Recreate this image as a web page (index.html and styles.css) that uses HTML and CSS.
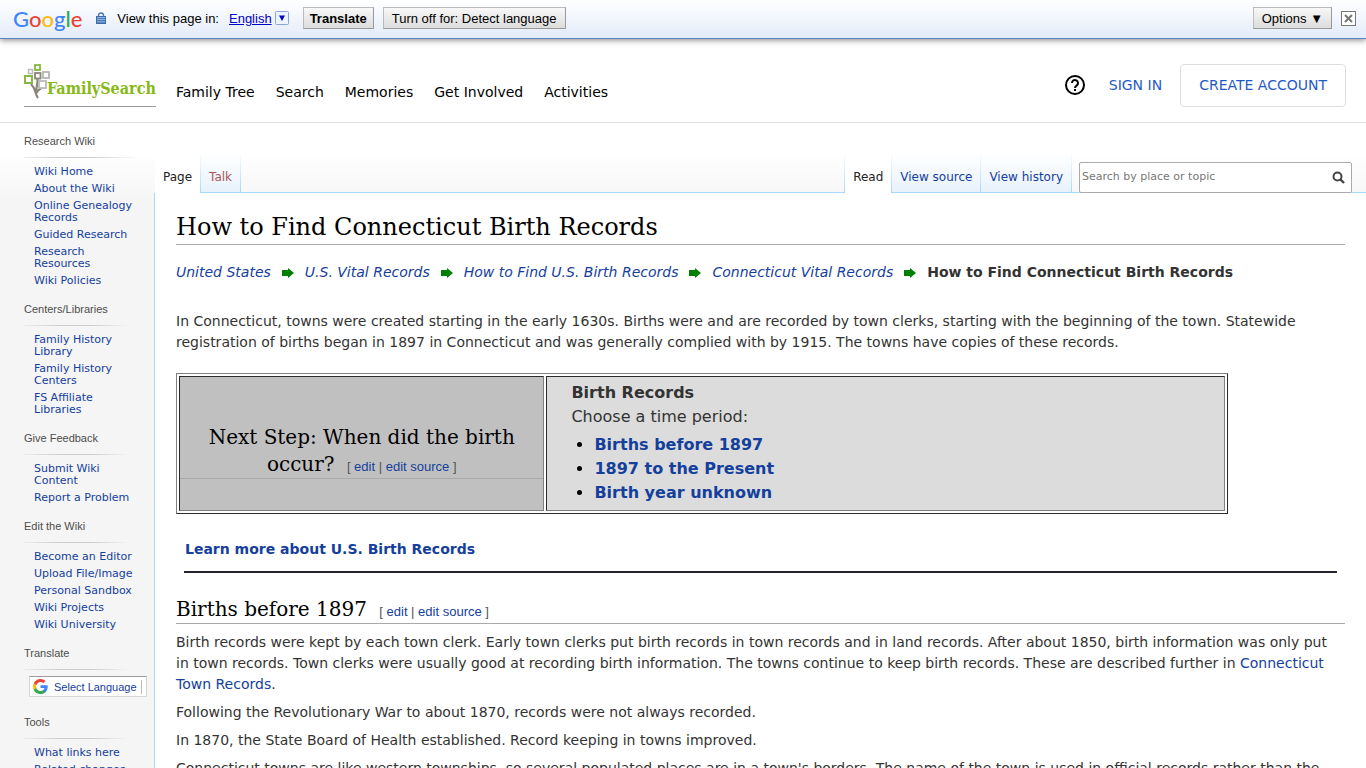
FILE: index.html
```html
<!DOCTYPE html>
<html lang="en">
<head>
  <meta charset="UTF-8" />
  <meta name="viewport" content="width=device-width, initial-scale=1.0"/>
  <title>How to Find Connecticut Birth Records</title>
  <link rel="stylesheet" href="styles.css">
</head>
<body>
  <div class="translate-bar">
    <div class="google-logo" aria-label="Google"><span class="g-blue">G</span><span class="g-red">o</span><span class="g-yellow">o</span><span class="g-blue">g</span><span class="g-green">l</span><span class="g-red">e</span></div>
    <svg class="lock" width="10" height="12" viewBox="0 0 10 12">
      <path d="M2.5 5V3.2a2.5 2.2 0 0 1 5 0V5" fill="none" stroke="#4a7ab8" stroke-width="1.4"/>
      <rect x="0.5" y="4.5" width="9" height="7" fill="#8fb4e3" stroke="#3d6ca8"/>
      <path d="M1 6.500h8M1 8.500h8M1 10.200h8" stroke="#3d6ca8" stroke-width="0.8"/>
    </svg>
    <span>View this page in:</span>
    <a class="language" href="#"><span>English</span><svg width="14" height="14" viewBox="0 0 14 14"><rect x="0.5" y="0.5" width="13" height="13" rx="1" fill="#eef4fd" stroke="#8aa5d6"/><path d="M4 4.500h6L7 10z" fill="#0000cc"/></svg></a>
    <button class="bar-button strong">Translate</button>
    <button class="bar-button">Turn off for: Detect language</button>
    <button class="bar-button options">Options ▼</button>
    <button class="close" aria-label="Close"><svg width="15" height="15" viewBox="0 0 15 15"><rect x="0.5" y="0.5" width="14" height="14" fill="#fff" stroke="#777"/><path d="M4 4l7 7M11 4l-7 7" stroke="#777" stroke-width="2"/></svg></button>
  </div>

  <header class="header">
    <a class="logo" href="#">
      <svg width="28" height="36" viewBox="0 0 28 36" fill="none">
        <path d="M14 34C10.500 30 13 26 7 20M12 28c0-5 2-7 1.500-13M12.500 29c1-3 3-4 5-5" stroke="#8c857b" stroke-width="2.200"/>
        <rect x="11" y="1" width="5" height="5" stroke="#87b940" stroke-width="1.800"/>
        <rect x="4.500" y="5.500" width="4" height="4" stroke="#bbb" stroke-width="1.500"/>
        <rect x="11" y="9" width="5.500" height="5.500" fill="#fff" stroke="#8c857b" stroke-width="1.800"/>
        <rect x="19" y="8" width="6" height="6" stroke="#b5b5b5" stroke-width="1.800"/>
        <rect x="1" y="12" width="7" height="7" fill="#fff" stroke="#87b940" stroke-width="2"/>
        <rect x="15" y="17" width="7" height="7" fill="#fff" stroke="#bbb" stroke-width="1.800"/>
      </svg>
      <span>FamilySearch</span>
    </a>
    <nav class="nav-links">
      <a href="#">Family Tree</a>
      <a href="#">Search</a>
      <a href="#">Memories</a>
      <a href="#">Get Involved</a>
      <a href="#">Activities</a>
    </nav>
    <div class="account">
      <a class="help" href="#" aria-label="Help"><svg width="20" height="20" viewBox="0 0 20 20" fill="none" stroke="#000" stroke-width="2"><circle cx="10" cy="10" r="9"/><path d="M7 8a3 3 0 1 1 4.800 2.400C10.700 11.200 10 11.700 10 13"/><path d="M10 14v2"/></svg></a>
      <a href="#">SIGN IN</a>
      <a class="create" href="#">CREATE ACCOUNT</a>
    </div>
  </header>

  <div class="page">
    <aside class="sidebar">
      <section class="portal">
        <h3>Research Wiki</h3>
        <ul>
          <li><a href="#">Wiki Home</a></li>
          <li><a href="#">About the Wiki</a></li>
          <li><a href="#">Online Genealogy Records</a></li>
          <li><a href="#">Guided Research</a></li>
          <li><a href="#">Research Resources</a></li>
          <li><a href="#">Wiki Policies</a></li>
        </ul>
      </section>
      <section class="portal">
        <h3>Centers/Libraries</h3>
        <ul>
          <li><a href="#">Family History Library</a></li>
          <li><a href="#">Family History Centers</a></li>
          <li><a href="#">FS Affiliate Libraries</a></li>
        </ul>
      </section>
      <section class="portal">
        <h3>Give Feedback</h3>
        <ul>
          <li><a href="#">Submit Wiki Content</a></li>
          <li><a href="#">Report a Problem</a></li>
        </ul>
      </section>
      <section class="portal">
        <h3>Edit the Wiki</h3>
        <ul>
          <li><a href="#">Become an Editor</a></li>
          <li><a href="#">Upload File/Image</a></li>
          <li><a href="#">Personal Sandbox</a></li>
          <li><a href="#">Wiki Projects</a></li>
          <li><a href="#">Wiki University</a></li>
        </ul>
      </section>
      <section class="portal">
        <h3>Translate</h3>
        <a class="select-language" href="#">
          <svg width="15" height="15" viewBox="0 0 48 48">
            <path fill="#4285f4" d="M47 24.500c0-1.600-.2-3.200-.5-4.700H24v9h12.900c-.6 3-2.300 5.500-4.800 7.200v6h7.700C44.400 37.900 47 31.800 47 24.500z"/>
            <path fill="#34a853" d="M24 48c6.500 0 11.900-2.100 15.900-5.800l-7.700-6c-2.200 1.400-4.900 2.300-8.200 2.300-6.300 0-11.600-4.200-13.500-9.900H2.600v6.200C6.500 42.600 14.600 48 24 48z"/>
            <path fill="#fbbc05" d="M10.500 28.600c-1-3-1-6.200 0-9.200v-6.200H2.600c-3.400 6.800-3.400 14.800 0 21.600z"/>
            <path fill="#ea4335" d="M24 9.500c3.500 0 6.700 1.200 9.200 3.600l6.800-6.800C35.900 2.400 30.500 0 24 0 14.600 0 6.500 5.400 2.600 13.200l7.900 6.200C12.400 13.700 17.700 9.500 24 9.500z"/>
          </svg>
          <span>Select Language</span>
        </a>
      </section>
      <section class="portal">
        <h3>Tools</h3>
        <ul>
          <li><a href="#">What links here</a></li>
          <li><a href="#">Related changes</a></li>
        </ul>
      </section>
    </aside>

    <div class="main">
      <div class="tabs">
        <a class="tab active" href="#">Page</a>
        <a class="tab new" href="#">Talk</a>
        <a class="tab active views" href="#">Read</a>
        <a class="tab" href="#">View source</a>
        <a class="tab" href="#">View history</a>
        <form class="search">
          <input type="search" placeholder="Search by place or topic" aria-label="Search by place or topic">
          <button type="button" aria-label="Search"><svg width="13" height="13" viewBox="0 0 13 13" fill="none" stroke="#444"><circle cx="5.500" cy="5.500" r="4" stroke-width="2"/><path d="M8.500 8.500l3.500 3.500" stroke-width="2.400"/></svg></button>
        </form>
      </div>

      <main class="content">
        <h1>How to Find Connecticut Birth Records</h1>
        <nav class="breadcrumb">
          <a href="#">United States</a>
          <svg width="12" height="10" viewBox="0 0 12 10"><path d="M0 2h6V0l6 5-6 5V8H0z" fill="#008000"/></svg>
          <a href="#">U.S. Vital Records</a>
          <svg width="12" height="10" viewBox="0 0 12 10"><path d="M0 2h6V0l6 5-6 5V8H0z" fill="#008000"/></svg>
          <a href="#">How to Find U.S. Birth Records</a>
          <svg width="12" height="10" viewBox="0 0 12 10"><path d="M0 2h6V0l6 5-6 5V8H0z" fill="#008000"/></svg>
          <a href="#">Connecticut Vital Records</a>
          <svg width="12" height="10" viewBox="0 0 12 10"><path d="M0 2h6V0l6 5-6 5V8H0z" fill="#008000"/></svg>
          <b>How to Find Connecticut Birth Records</b>
        </nav>

        <p>In Connecticut, towns were created starting in the early 1630s. Births were and are recorded by town clerks, starting with the beginning of the town. Statewide registration of births began in 1897 in Connecticut and was generally complied with by 1915. The towns have copies of these records.</p>

        <table class="next-step">
          <tr>
            <td class="question">
              <h2>Next Step: When did the birth occur? <span class="edit">[ <a href="#">edit</a> | <a href="#">edit source</a> ]</span></h2>
            </td>
            <td class="choices">
              <b>Birth Records</b><br>
              Choose a time period:
              <ul>
                <li><a href="#births">Births before 1897</a></li>
                <li><a href="#">1897 to the Present</a></li>
                <li><a href="#">Birth year unknown</a></li>
              </ul>
            </td>
          </tr>
        </table>

        <div class="learn-more"><a href="#">Learn more about U.S. Birth Records</a></div>

        <h2 id="births">Births before 1897 <span class="edit">[ <a href="#">edit</a> | <a href="#">edit source</a> ]</span></h2>
        <p>Birth records were kept by each town clerk. Early town clerks put birth records in town records and in land records. After about 1850, birth information was only put in&nbsp;town records. Town clerks were usually good at recording birth information. The towns continue to keep birth records. These are described further in <a href="#">Connecticut Town Records</a>.</p>
        <p>Following the Revolutionary War to about 1870, records were not always recorded.</p>
        <p>In 1870, the State Board of Health established. Record keeping in towns improved.</p>
        <p>Connecticut towns are like western townships, so several populated places are in a town's borders. The name of the town is used in official records rather than the</p>
      </main>
    </div>
  </div>
</body>
</html>
```

FILE: styles.css
```css
* {
  box-sizing: border-box;
}

body {
  margin: 0;
  background: #fff;
  color: #333;
  font-family: Verdana, 'DejaVu Sans', sans-serif;
  font-size: 14px;
  line-height: 21px;
}

a {
  color: #14409c;
  text-decoration: none;
}

ul {
  margin: 0;
  padding: 0;
}

svg {
  display: block;
  flex: none;
}

/* translate toolbar */
.translate-bar {
  position: relative;
  display: flex;
  align-items: center;
  height: 39px;
  padding: 0 10px 2px 13px;
  background: linear-gradient(#fff, #e3ecf9);
  border-bottom: 1px solid #5f82c4;
  box-shadow: 0 1px 6px rgba(0, 0, 0, 0.5);
  color: #000;
  font-family: Arial, 'Liberation Sans', sans-serif;
  font-size: 13px;
}

.google-logo {
  font-family: Lato, sans-serif;
  font-size: 22px;
  font-weight: 500;
  margin-right: 14px;
}

.g-blue { color: #4285f4; }
.g-red { color: #ea4335; }
.g-yellow { color: #fbbc05; }
.g-green { color: #34a853; }

.lock {
  margin-right: 11px;
}

.language {
  display: flex;
  align-items: center;
  gap: 3px;
  margin: 0 14px 0 10px;
  color: #0000cc;
}

.language span {
  text-decoration: underline;
}

.bar-button {
  height: 22px;
  margin-right: 9px;
  padding: 0 6px;
  background: linear-gradient(#f8f8f8, #dcdcdc);
  border: 1px solid #bbb;
  border-right-color: #999;
  border-bottom-color: #999;
  color: #000;
  font: 13px Arial, 'Liberation Sans', sans-serif;
}

.bar-button:not(.strong) {
  padding: 0 8px;
}

.strong {
  font-weight: bold;
}

.options {
  margin-left: auto;
}

.close {
  padding: 0;
  background: none;
  border: none;
}

/* site header */
.header {
  display: flex;
  align-items: center;
  height: 84px;
  padding: 9px 20px 0 24px;
  border-bottom: 1px solid #ddd;
}

.logo {
  display: flex;
  width: 132px;
  height: 43px;
  margin-right: 20px;
  border-bottom: 1px solid #999;
  color: #87b914;
  font-family: 'DejaVu Serif Condensed', 'DejaVu Serif', serif;
  font-size: 16px;
  font-weight: bold;
}

.logo span {
  margin: 14px 0 0 -5px;
}

.nav-links {
  display: flex;
  gap: 21px;
  padding-top: 14px;
}

.nav-links a {
  color: #000;
}

.account {
  display: flex;
  align-items: center;
  margin-left: auto;
}

.account a {
  color: #1f5bc8;
}

.help {
  margin-right: 24px;
}

.create {
  margin-left: 18px;
  padding: 10px 18px;
  border: 1px solid #ddd;
  border-radius: 4px;
}

/* sidebar */
.page {
  display: flex;
  background: linear-gradient(#fff 30px, #f5f5f5 80px);
}

.sidebar {
  flex: none;
  width: 154px;
  padding: 10px 20px 0 24px;
}

.portal {
  margin-bottom: 9px;
}

.portal h3 {
  margin: 0 0 8px;
  padding-bottom: 8px;
  border-bottom: 1px solid;
  border-image: linear-gradient(to right, #eee, #ccc 33%, #ccc 60%, #f5f5f5 95%) 1;
  color: #4d4d4d;
  font: 11px/16px Arial, 'Liberation Sans', sans-serif;
}

.portal ul {
  padding-left: 10px;
  list-style: none;
}

.portal li {
  padding-bottom: 5px;
  font-size: 11px;
  line-height: 12px;
}

.select-language {
  display: flex;
  align-items: center;
  gap: 6px;
  width: 118px;
  height: 21px;
  margin: -2px 0 17px 5px;
  padding: 0 3px;
  background: #fff;
  border: 1px solid #d5d5d5;
  border-top-color: #9b9b9b;
  font: 11px/14px Arial, 'Liberation Sans', sans-serif;
  white-space: nowrap;
}

.select-language span {
  padding-right: 4px;
  border-right: 1px solid #bbb;
}

/* tabs */
.main {
  flex: 1;
  min-width: 0;
}

.tabs {
  display: flex;
  align-items: flex-end;
  height: 70px;
  padding-right: 14px;
  border-left: 1px solid transparent;
  background: linear-gradient(#a7d7f9, #a7d7f9) bottom / 100% 1px no-repeat;
}

.tab {
  height: 40px;
  padding: 14px 8px 0;
  background: linear-gradient(#fff, #e8f2fb);
  border: solid transparent;
  border-width: 0 1px 1px 0;
  border-image: linear-gradient(#fff, #a7d7f9) 1;
  font-size: 12px;
  line-height: 20px;
}

.tab.active {
  background: #fff;
  border-bottom: 0;
  color: #222;
}

.tab.new {
  color: #a55858;
}

.tab.views {
  margin-left: auto;
  border-left: 1px solid transparent;
}

.search {
  display: flex;
  align-items: center;
  width: 273px;
  height: 31px;
  margin-left: 7px;
  padding: 0 6px 0 2px;
  background: #fff;
  border: 1px solid #aaa;
  border-radius: 2px;
}

.search input {
  flex: 1;
  min-width: 0;
  padding: 0 0 2px;
  background: none;
  border: none;
  font: 11px Verdana, 'DejaVu Sans', sans-serif;
}

.search input::placeholder {
  color: #777;
}

.search button {
  padding: 0;
  background: none;
  border: none;
}

/* article */
.content {
  padding: 17px 21px 20px;
  background: #fff;
  border-left: 1px solid #a7d7f9;
}

h1,
h2 {
  margin: 0;
  border-bottom: 1px solid #aaa;
  color: #000;
  font-family: 'Museo Slab', 'DejaVu Serif', serif;
  font-weight: normal;
}

h1 {
  font-size: 24px;
  line-height: 34px;
}

h2 {
  font-size: 20px;
  line-height: 27px;
}

p {
  margin: 0 0 7px;
}

.breadcrumb {
  display: flex;
  flex-wrap: wrap;
  align-items: center;
  column-gap: 11px;
  margin: 17px 0 28px;
}

.breadcrumb a {
  font-style: italic;
}

.edit {
  margin-left: 6px;
  color: #555;
  font: 13px Arial, 'Liberation Sans', sans-serif;
}

.next-step {
  width: 90%;
  margin-top: 20px;
  border: 1px solid #808080;
  border-right-color: #2b2b2b;
  border-bottom-color: #2b2b2b;
  border-spacing: 2px;
}

.next-step td {
  border: 1px solid #2b2b2b;
  border-right-color: #808080;
  border-bottom-color: #808080;
}

.question {
  width: 35%;
  padding: 16px 0 0;
  background: #c0c0c0;
  text-align: center;
}

.question h2 {
  padding: 0 24px;
}

.choices {
  padding: 4px 24px 5px;
  background: #dcdcdc;
  font-size: 16px;
  line-height: 24px;
}

.choices ul {
  padding: 4px 0 0 23px;
}

.choices li::marker {
  color: #000;
}

.choices a,
.learn-more {
  font-weight: bold;
}

.learn-more {
  margin: 16px 8px 23px;
  padding: 9px 1px 11px;
  border-bottom: 2px solid #252530;
}

.content > h2 {
  margin-bottom: 8px;
}
```
